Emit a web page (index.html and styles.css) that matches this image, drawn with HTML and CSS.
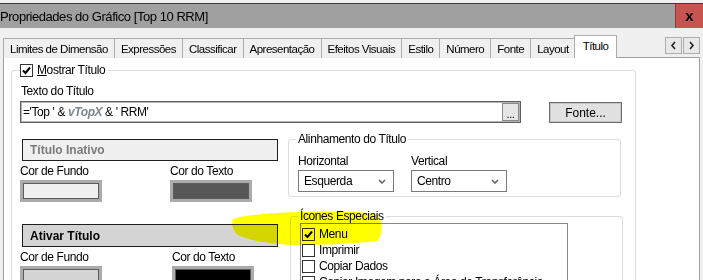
FILE: index.html
```html
<!DOCTYPE html>
<html lang="pt">
  <head>
    <meta charset="UTF-8" />
    <title>Propriedades do Gráfico</title>
    <link rel="stylesheet" href="styles.css">
  </head>
  <body>
    <div class="topstrip"></div>
    <div class="titlebar">
      <span class="title">Propriedades do Gráfico [Top 10 RRM]</span>
      <span class="close">x</span>
    </div>

    <div class="dialog">
      <div class="tabbar">
        <div class="tab">Limites de Dimensão</div>
        <div class="tab">Expressões</div>
        <div class="tab">Classificar</div>
        <div class="tab">Apresentação</div>
        <div class="tab">Efeitos Visuais</div>
        <div class="tab">Estilo</div>
        <div class="tab">Número</div>
        <div class="tab">Fonte</div>
        <div class="tab">Layout</div>
        <div class="tab current">Título</div>
        <div class="tab-scroll">
          <span class="scroll-btn">
            <svg width="7" height="9" viewBox="0 0 7 9"><polyline points="5,1 2,4.5 5,8" /></svg>
          </span>
          <span class="scroll-btn">
            <svg width="7" height="9" viewBox="0 0 7 9"><polyline points="2,1 5,4.5 2,8" /></svg>
          </span>
        </div>
      </div>

      <div class="panel">
        <fieldset class="group group-main">
          <legend class="check-legend">
            <span class="checkbox checked">
              <svg width="11" height="11" viewBox="0 0 11 11"><polyline points="2,5.5 4.5,8 9,2.5" /></svg>
            </span>
            <span><u>M</u>ostrar Título</span>
          </legend>

          <div class="label label-first">Texto do Título</div>
          <div class="title-row">
            <div class="textbox">
              <span class="expr">='Top ' &amp; <em class="var">vTopX</em> &amp; ' RRM'</span>
              <span class="dots">...</span>
            </div>
            <button class="btn">Fonte...</button>
          </div>

          <div class="cols">
            <div class="col-left">
              <div class="style-box inactive">Título Inativo</div>
              <div class="color-row">
                <div class="color-field">
                  <div class="label">Cor de Fundo</div>
                  <div class="swatch light"></div>
                </div>
                <div class="color-field">
                  <div class="label">Cor do Texto</div>
                  <div class="swatch dark"></div>
                </div>
              </div>

              <div class="style-box enabled">Ativar Título</div>
              <div class="color-row">
                <div class="color-field">
                  <div class="label">Cor de Fundo</div>
                  <div class="swatch mid"></div>
                </div>
                <div class="color-field shifted">
                  <div class="label">Cor do Texto</div>
                  <div class="swatch black"></div>
                </div>
              </div>
            </div>

            <div class="col-right">
              <fieldset class="group align-group">
                <legend>Alinhamento do Título</legend>
                <div class="select-row">
                  <div class="field">
                    <div class="label">Horizontal</div>
                    <div class="select">
                      <span>Esquerda</span>
                      <svg width="8" height="5" viewBox="0 0 8 5"><polyline points="1,1 4,4 7,1" /></svg>
                    </div>
                  </div>
                  <div class="field">
                    <div class="label">Vertical</div>
                    <div class="select">
                      <span>Centro</span>
                      <svg width="8" height="5" viewBox="0 0 8 5"><polyline points="1,1 4,4 7,1" /></svg>
                    </div>
                  </div>
                </div>
              </fieldset>

              <fieldset class="group icons-group">
                <legend>Ícones Especiais</legend>
                <div class="listbox">
                  <div class="list-item">
                    <span class="checkbox checked">
                      <svg width="11" height="11" viewBox="0 0 11 11"><polyline points="2,5.5 4.5,8 9,2.5" /></svg>
                    </span>
                    Menu
                  </div>
                  <div class="list-item"><span class="checkbox"></span>Imprimir</div>
                  <div class="list-item"><span class="checkbox"></span>Copiar Dados</div>
                  <div class="list-item"><span class="checkbox"></span>Copiar Imagem para a Área de Transferência</div>
                </div>
              </fieldset>
            </div>
          </div>
        </fieldset>
      </div>
    </div>

    <!-- yellow marker stroke drawn over the screenshot -->
    <svg class="marker" width="703" height="280" viewBox="0 0 703 280">
      <path d="M233,219 C245,215 270,213 300,212 C330,211 360,211 375,214 C383,217 384,236 377,241 C350,244 320,245 300,245 C280,245 255,242 240,236 C233,233 231,224 233,219 Z" />
    </svg>
  </body>
</html>
```

FILE: styles.css
```css
body {
  margin: 0;
  width: 703px;
  height: 280px;
  overflow: hidden;
  position: relative;
  background: #f0f0f0;
  color: #000;
  font-family: "Liberation Sans", Arial, sans-serif;
  font-size: 12px;
  letter-spacing: -0.4px;
}

.topstrip {
  height: 3px;
  background: #f0f0f0;
  border-bottom: 1px solid #3c3c3c;
}

.titlebar {
  height: 24px;
  background: #a0a0a0;
  display: flex;
  align-items: center;
}
.title {
  flex: 1;
  font-size: 13px;
  letter-spacing: -0.45px;
  white-space: nowrap;
}
.close {
  width: 28px;
  height: 24px;
  background: #c75450;
  border-left: 1px solid #8e3b37;
  display: flex;
  align-items: center;
  justify-content: center;
  font-weight: bold;
  font-size: 15px;
  letter-spacing: 0;
  padding-bottom: 2px;
  box-sizing: border-box;
}

.dialog {
  padding: 7px 3px 0 3px;
}

/* tabs */
.tabbar {
  display: flex;
  align-items: flex-end;
  height: 23px;
  margin-bottom: -1px;
  position: relative;
}
.tab {
  height: 20px;
  box-sizing: border-box;
  padding: 0 6px 0 6px;
  border: 1px solid #adadad;
  border-bottom: none;
  margin-right: -1px;
  background: #f0f0f0;
  display: flex;
  align-items: center;
  font-size: 11.5px;
  letter-spacing: -0.5px;
  white-space: nowrap;
}
.tab.current {
  height: 23px;
  background: #fff;
  padding: 0 8px 3px 8px;
  margin-left: -1px;
  position: relative;
  z-index: 1;
}
.tab-scroll {
  margin-left: auto;
  align-self: flex-start;
  margin-top: 2px;
  display: flex;
  gap: 1px;
}
.scroll-btn {
  width: 17px;
  height: 17px;
  box-sizing: border-box;
  border: 1px solid #adadad;
  background: #e8e8e8;
  display: flex;
  align-items: center;
  justify-content: center;
}
.scroll-btn polyline {
  fill: none;
  stroke: #222;
  stroke-width: 1.6;
}

.panel {
  background: #fff;
  border: 1px solid #a0a0a0;
  height: 240px;
  padding: 6px 0 0 7px;
  box-sizing: border-box;
}

/* group boxes */
.group {
  margin: 0;
  min-width: 0;
  border: 1px solid #dcdcdc;
  border-radius: 3px;
  box-sizing: border-box;
}
.group legend {
  padding: 0 2px;
  margin-left: -2px;
  line-height: 13px;
}
.group-main {
  width: 625px;
  height: 260px;
  padding: 0 12px 0 8px;
}
.check-legend {
  display: flex;
  align-items: center;
  gap: 4px;
  line-height: 14px;
}
.group-main > .check-legend {
  margin-left: 0;
  padding: 0 3px 0 0;
}

.checkbox {
  width: 13px;
  height: 13px;
  box-sizing: border-box;
  border: 1px solid #333;
  background: #fff;
  display: inline-flex;
  align-items: center;
  justify-content: center;
  flex: none;
}
.checkbox polyline {
  fill: none;
  stroke: #000;
  stroke-width: 2;
}

.label {
  line-height: 14px;
  white-space: nowrap;
}
.label-first {
  padding-top: 7px;
  margin-left: 1px;
}

.title-row {
  display: flex;
  align-items: flex-start;
  gap: 28px;
  margin-top: 3px;
}
.textbox {
  width: 501px;
  height: 22px;
  box-sizing: border-box;
  border: 1px solid #5f5f5f;
  box-shadow: inset 0 0 0 1px #b4b4b4;
  display: flex;
  align-items: center;
  padding: 0 1px 0 2px;
}
.expr {
  flex: 1;
  white-space: pre;
}
.var {
  color: #7d8691;
  font-weight: bold;
}
.dots {
  width: 17px;
  height: 18px;
  box-sizing: border-box;
  border: 1px solid #8a8a8a;
  background: #e6e6e6;
  display: flex;
  align-items: flex-end;
  justify-content: center;
  font-size: 11px;
  line-height: 12px;
}
.btn {
  width: 73px;
  height: 21px;
  margin-top: 1px;
  border: 1px solid #6e6e6e;
  box-shadow: inset 0 0 0 1px #c4c4c4;
  background: #e1e1e1;
  font: inherit;
  padding: 0;
}

.cols {
  display: flex;
  margin-top: 10px;
}
.col-left {
  width: 268px;
  flex: none;
}
.col-right {
  width: 335px;
  flex: none;
}

.style-box {
  width: 256px;
  height: 22px;
  box-sizing: border-box;
  margin-left: 2px;
  border: 1px solid #1e1e1e;
  display: flex;
  align-items: center;
  padding-left: 7px;
  font-weight: bold;
  letter-spacing: 0;
}
.inactive {
  margin-top: 6px;
  background: #f0f0f0;
  color: #7a7a7a;
}
.enabled {
  margin-top: 22px;
  height: 23px;
  background: #d4d4d4;
}

.color-row {
  display: flex;
  margin-top: 3px;
}
.color-field {
  width: 150px;
  flex: none;
}
.color-field.shifted {
  padding-left: 2px;
}
.swatch {
  width: 82px;
  height: 22px;
  box-sizing: border-box;
  margin-top: 2px;
  border: 3px solid #ababab;
  box-shadow: inset 0 0 0 1px #5c5c5c;
}
.swatch.light { background: #f0f0f0; }
.swatch.dark { background: #575757; }
.swatch.mid { background: #d4d4d4; }
.swatch.black { background: #000; }

.align-group {
  width: 333px;
  padding: 8px 0 4px 9px;
}
.select-row {
  display: flex;
  gap: 17px;
}
.select-row .label {
  margin-bottom: 2px;
}
.select {
  width: 96px;
  height: 22px;
  box-sizing: border-box;
  border: 1px solid #7a7a7a;
  display: flex;
  align-items: center;
  justify-content: space-between;
  padding: 0 7px 0 5px;
}
.select polyline {
  fill: none;
  stroke: #606060;
  stroke-width: 1.5;
}

.icons-group {
  width: 333px;
  height: 80px;
  margin: 13px 0 0 2px;
  padding: 0 0 0 9px;
}
.listbox {
  width: 268px;
  height: 70px;
  box-sizing: border-box;
  border: 1px solid #828790;
  padding: 2px 0 0 1px;
  overflow: hidden;
}
.list-item {
  height: 16px;
  display: flex;
  align-items: center;
  gap: 4px;
  white-space: nowrap;
}

.marker {
  position: absolute;
  left: 0;
  top: 0;
  pointer-events: none;
  mix-blend-mode: multiply;
}
.marker path {
  fill: #ffff00;
}
```
